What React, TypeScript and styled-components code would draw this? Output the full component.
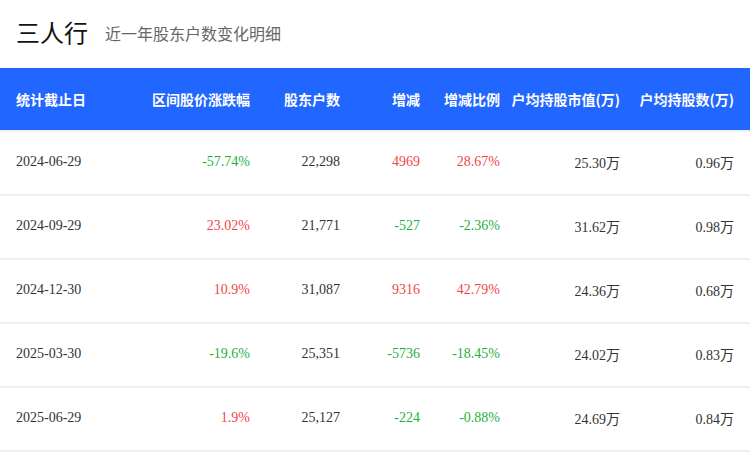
import React from 'react';
import styled, { createGlobalStyle } from 'styled-components';

const GlobalStyle = createGlobalStyle`
	body {
		margin: 0;
		background: #fff;
		font-family: 'Liberation Serif', 'Noto Sans CJK SC', serif;
	}
`;

interface IRow {
	date: string;
	range: string;
	holders: string;
	change: string;
	ratio: string;
	value: string;
	shares: string;
}

const rows: IRow[] = [
	{ date: '2024-06-29', range: '-57.74%', holders: '22,298', change: '4969', ratio: '28.67%', value: '25.30万', shares: '0.96万' },
	{ date: '2024-09-29', range: '23.02%', holders: '21,771', change: '-527', ratio: '-2.36%', value: '31.62万', shares: '0.98万' },
	{ date: '2024-12-30', range: '10.9%', holders: '31,087', change: '9316', ratio: '42.79%', value: '24.36万', shares: '0.68万' },
	{ date: '2025-03-30', range: '-19.6%', holders: '25,351', change: '-5736', ratio: '-18.45%', value: '24.02万', shares: '0.83万' },
	{ date: '2025-06-29', range: '1.9%', holders: '25,127', change: '-224', ratio: '-0.88%', value: '24.69万', shares: '0.84万' },
];

const columns = '118px 116px 90px 80px 80px 120px 114px';

const Root = styled.div`
	width: 750px;
`;

const TitleBar = styled.div`
	height: 68px;
	display: flex;
	align-items: center;
	padding: 0 17px 0 16px;
	gap: 17px;
	box-sizing: border-box;
`;

const Title = styled.h1`
	margin: -5px 0 0;
	font-family: 'Noto Sans CJK SC', sans-serif;
	font-size: 24px;
	font-weight: 400;
	color: #111;
`;

const Subtitle = styled.span`
	font-family: 'Noto Sans CJK SC', sans-serif;
	font-size: 16px;
	color: #666;
	margin-top: -3px;
`;

const Head = styled.div`
	display: grid;
	grid-template-columns: ${columns};
	align-items: center;
	height: 62px;
	padding: 0 16px;
	background: #2166ff;
	border-bottom: 2px solid #efefef;
`;

const HeadCell = styled.div<{ $left?: boolean }>`
	font-family: 'Noto Sans CJK SC', sans-serif;
	font-size: 14px;
	font-weight: 700;
	color: #fff;
	text-align: ${(p) => (p.$left ? 'left' : 'right')};
	white-space: nowrap;
`;

const Row = styled.div`
	display: grid;
	grid-template-columns: ${columns};
	align-items: center;
	height: 62px;
	padding: 0 16px;
	border-bottom: 2px solid #efefef;
`;

const Cell = styled.div<{ $left?: boolean; $tone?: 'up' | 'down' }>`
	font-size: 14px;
	color: ${(p) => (p.$tone === 'up' ? '#f04848' : p.$tone === 'down' ? '#1fb041' : '#333')};
	text-align: ${(p) => (p.$left ? 'left' : 'right')};
	white-space: nowrap;
	margin-top: -2px;
`;

const tone = (v: string) => (v.startsWith('-') ? 'down' : 'up');

const App = () => {
	return (
		<Root>
			<GlobalStyle />
			<TitleBar>
				<Title>三人行</Title>
				<Subtitle>近一年股东户数变化明细</Subtitle>
			</TitleBar>

			<Head>
				<HeadCell $left>统计截止日</HeadCell>
				<HeadCell>区间股价涨跌幅</HeadCell>
				<HeadCell>股东户数</HeadCell>
				<HeadCell>增减</HeadCell>
				<HeadCell>增减比例</HeadCell>
				<HeadCell>户均持股市值(万)</HeadCell>
				<HeadCell>户均持股数(万)</HeadCell>
			</Head>

			{rows.map((r) => (
				<Row key={r.date}>
					<Cell $left>{r.date}</Cell>
					<Cell $tone={tone(r.range)}>{r.range}</Cell>
					<Cell>{r.holders}</Cell>
					<Cell $tone={tone(r.change)}>{r.change}</Cell>
					<Cell $tone={tone(r.ratio)}>{r.ratio}</Cell>
					<Cell>{r.value}</Cell>
					<Cell>{r.shares}</Cell>
				</Row>
			))}
		</Root>
	);
};

export default App;
